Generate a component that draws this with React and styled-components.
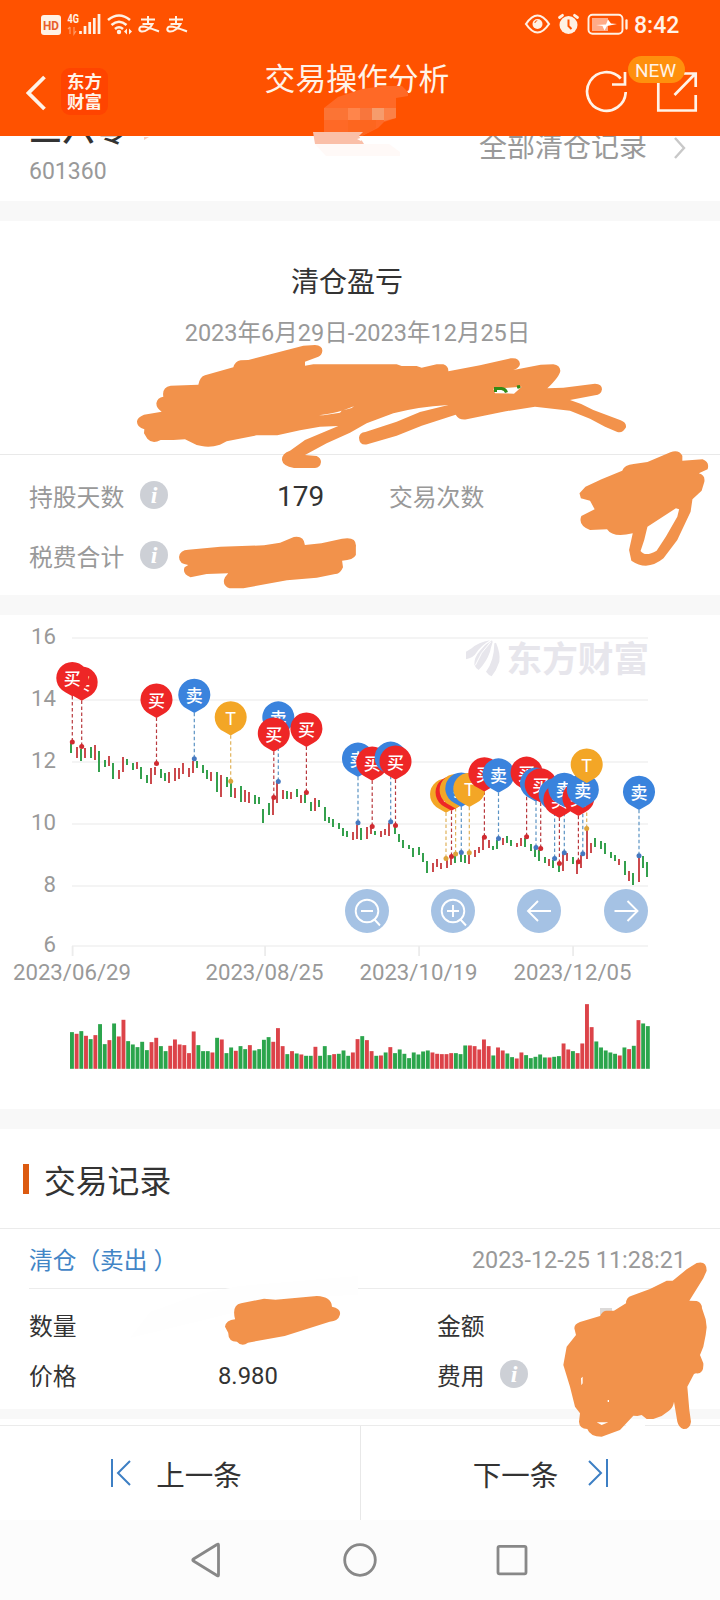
import React from 'react'
import styled, {createGlobalStyle} from 'styled-components'

const RED = '#ee2626'
const BLUE = '#3a83dd'
const GOLD = '#f3a626'

// [x, top, bottom, up/down]
const candles = `71 743 753 g,77 747 758 r,81 749 761 g,85 748 758 r,91 747 758 g,95 745 760 r,99 751 772 g,105 760 767 g,109 756 766 r,113 763 779 g,119 770 779 r,123 757 772 r,127 759 765 g,133 763 770 g,137 762 769 r,141 767 779 g,147 775 783 g,151 768 784 r,155 767 775 r,161 769 778 g,165 773 781 g,169 772 783 r,175 768 781 r,179 768 779 r,183 763 774 r,189 768 777 r,193 761 773 r,197 761 768 g,203 765 773 g,207 770 779 g,211 772 781 r,217 772 792 g,221 775 797 r,227 777 787 g,231 782 797 g,235 788 798 r,241 786 802 g,245 790 802 r,249 792 803 r,255 795 804 g,259 797 804 g,263 809 823 g,269 803 815 g,273 797 815 r,277 783 803 r,283 790 799 r,287 791 799 g,291 792 799 r,297 789 797 g,301 795 803 r,305 794 803 g,311 802 811 g,315 798 811 r,319 800 807 g,325 807 821 g,329 817 823 g,333 819 827 g,339 823 829 g,343 828 836 g,347 831 837 g,353 832 840 r,357 825 839 r,361 828 840 g,367 827 839 r,371 825 834 r,375 831 835 g,381 831 837 r,385 829 835 r,389 823 836 r,395 824 834 g,399 834 842 g,403 840 848 g,409 845 849 g,413 848 857 g,419 847 855 g,423 853 862 g,427 861 873 g,433 863 872 r,437 859 867 r,441 863 869 r,447 859 868 r,451 856 865 r,455 854 863 g,461 853 862 g,465 855 863 g,469 855 864 r,475 850 857 r,479 847 853 r,483 838 850 r,489 840 848 r,493 846 850 g,497 840 849 g,503 838 845 r,507 836 843 g,511 840 846 g,517 843 847 r,521 838 846 r,525 838 847 g,531 844 851 g,535 848 857 g,539 850 861 g,545 857 863 g,549 859 866 r,553 860 868 g,559 863 872 g,563 853 871 r,567 853 861 r,573 857 864 g,577 861 874 r,581 855 868 r,587 830 859 r,591 843 853 r,595 838 847 g,601 841 849 g,605 843 854 g,611 852 858 g,615 855 861 g,619 859 865 r,625 861 875 g,629 871 881 r,633 873 885 g,639 857 882 r,643 856 868 g,647 862 877 g`
    .split(',').map(c => c.split(' '))

// [x, price point y, kind], painted in order
const trades = [
    [81.7, 746.5, 'b'], [72.3, 742, 'b'], [156.5, 763.6, 'b'], [194.3, 758.8, 's'], [230.7, 781.3, 't'],
    [278.3, 781.4, 's'], [273.8, 797.5, 'b'], [306.4, 792.6, 'b'], [358, 822.7, 's'], [372.2, 826.5, 'b'],
    [390.7, 821.7, 's'], [395.5, 825.5, 'b'], [446, 858.5, 't'], [451.5, 856.4, 'b'], [455.6, 854.1, 't'],
    [461.3, 852.6, 's'], [469.3, 852.8, 't'], [484.4, 837.3, 'b'], [498.5, 838.4, 's'], [526.6, 836.7, 'b'],
    [536, 847.5, 's'], [540.7, 848.4, 'b'], [554.6, 858.4, 's'], [559.4, 863.6, 'b'], [564.3, 852.8, 's'],
    [578.4, 861.7, 'b'], [582.8, 853.7, 's'], [586.7, 828.6, 't'], [639, 855.8, 's'],
]

const kinds = {
    b: {label: '买', fill: RED, line: '#b8393e'},
    s: {label: '卖', fill: BLUE, line: '#5b93c4'},
    t: {label: 'T', fill: GOLD, line: '#e0b25a'},
}

const volumes = 'g110 r105 g113 r99 g89 r101 g134 g74 r86 g136 r97 r147 g83 g73 g65 g81 g56 r80 r93 g68 g53 r69 r88 r73 r71 r47 r112 g71 g53 g53 r49 g93 r88 g47 g64 r54 g68 g59 r71 g55 g59 g87 g95 r81 r122 r68 g44 r53 g46 r43 g39 g39 r66 g39 g68 g41 r44 g45 g55 g39 r49 r89 g98 r86 r53 g39 r40 g49 r65 g47 g58 g45 g32 g49 g43 g52 g55 r49 r45 r44 r44 r47 g47 g44 g70 r70 r68 r58 r88 r68 g40 r64 r55 g46 g35 r31 r49 g41 g32 g36 g43 g34 r34 g36 g38 r76 r58 g53 r47 r76 r194 r125 g82 g64 g55 g49 g45 r40 g64 r59 g69 r146 g136 g128'
    .split(' ')

const gridLines = [[16, 638], [14, 700], [12, 762], [10, 824], [8, 886], [6, 946]]
const days = [['2023/06/29', 72.5], ['2023/08/25', 265], ['2023/10/19', 419], ['2023/12/05', 573]]

function Marker({x, y, kind}) {
    const {label, fill} = kinds[kind]
    const cy = y - 62.7
    return (
        <g>
            <path d={`M${x} ${cy + 17}L${x - 7} ${cy + 13}A16 16 0 1 1 ${x + 7} ${cy + 13}Z`} fill={fill} />
            <MarkerText x={x} y={cy + 6} $latin={kind === 't'}>{label}</MarkerText>
        </g>
    )
}

function TradeChart() {
    return (
        <Chart viewBox="0 615 720 494">
            {gridLines.map(([price, y]) => (
                <g key={price}>
                    <rect x="72" y={y - 1} width="576" height="2" fill="#f4f4f4" />
                    <AxisText x="56" y={y + 5.5} textAnchor="end">{price}</AxisText>
                </g>
            ))}
            {days.map(([day, x]) => (
                <g key={day}>
                    <rect x={x - 0.8} y="946" width="1.8" height="10" fill="#ececec" />
                    <AxisText x={x - 0.5} y="980" textAnchor="middle">{day}</AxisText>
                </g>
            ))}
            <g fill="#e7e6ec">
                <g transform="translate(440 620) scale(.33333)">
                    <path d="M78 95L95 85Q115 67 150 61Q122 78 108 100 100 114 78 118z" />
                    <path d="M103 134Q102 112 120 92 136 72 156 61L158 66Q152 85 150 95 140 125 116 150 107 145 103 134z" />
                    <path d="M138 155Q162 125 163 70L168 68Q182 100 178 125 170 150 155 169 145 165 138 155z" />
                    <path d="M152 66Q120 98 106 136" fill="none" stroke="#fff" strokeWidth="3" />
                </g>
                <Watermark x="506.500" y="671.500">东方财富</Watermark>
            </g>
            {candles.map(([x, top, bottom, dir]) => (
                <rect key={x} x={x - 1} y={top} width="2" height={bottom - top} fill={dir === 'r' ? '#cb4a4d' : '#34a04d'} />
            ))}
            {trades.map(([x, y, kind]) => (
                <g key={x}>
                    <path d={`M${x} ${y - 46}V${y}`} stroke={kinds[kind].line} strokeWidth="1.2" strokeDasharray="3.5 2.5" />
                    <circle cx={x} cy={y} r="2.5" fill={kind === 's' ? '#4578c0' : kind === 't' ? '#dda43c' : '#d02a30'} />
                </g>
            ))}
            {trades.map(([x, y, kind]) => <Marker key={x} x={x} y={y} kind={kind} />)}
            {volumes.map((v, i) => {
                const h = v.slice(1) / 3
                return <rect key={i} x={70 + i * 4.682} y={1068.8 - h} width="3.9" height={h} fill={v[0] === 'r' ? '#dc4349' : '#2ba54c'} />
            })}
            {[367, 453, 539, 626].map(x => <circle key={x} cx={x} cy="911" r="22" fill="#a5c2e4" />)}
            <g fill="none" stroke="#fff" strokeWidth="1.9">
                <circle cx="367" cy="911" r="11.300" />
                <path d="M361 911h12M374 919l6 6.500" />
                <circle cx="453" cy="911" r="11.300" />
                <path d="M447 911h12M453 905v12M460 919l6 6.500" />
                <path d="M551 911h-23M538 901l-10 10 10 10" />
                <path d="M614.500 911h23M627.500 901l10 10-10 10" />
            </g>
        </Chart>
    )
}

function Info() {
    return (
        <InfoIcon viewBox="0 0 28 28">
            <circle cx="14" cy="14" r="14" fill="#cdd0d6" />
            <text x="14" y="22" textAnchor="middle" fill="#fff">i</text>
        </InfoIcon>
    )
}

function StatusIcons() {
    return (
        <svg width="170" height="30" viewBox="38 9 170 30" fill="none" stroke="#fff1e4">
            <rect x="41" y="15" width="20" height="20" rx="3" fill="#fff1e4" stroke="none" />
            <SmallText x="43" y="29.500" fill="#e8602a" textLength="16" lengthAdjust="spacingAndGlyphs" $size={12.5}>HD</SmallText>
            <SmallText x="67.500" y="23" fill="#fff1e4" textLength="11.500" lengthAdjust="spacingAndGlyphs" $size={12}>4G</SmallText>
            <path d="M70 27v7M68 29l2-2M74 27v7l2-3" stroke="#ff9a66" strokeWidth="1.200" />
            <path d="M80.500 31v3M85 26v8M89.700 22v12M94.300 18v16M99 14v20" strokeWidth="2.700" />
            <path d="M108 20q11-9 22 0M111.500 25q7.500-6.500 15 0M115 29q4-3.500 8 0" strokeWidth="2.600" />
            <circle cx="119" cy="32" r="2.200" fill="#fff1e4" stroke="none" />
            <path d="M124 31.500l3-3v6zM132 31.500l-3-3v6z" fill="#fff1e4" stroke="none" />
            {[0, 28].map(dx => (
                <g key={dx} transform={`translate(${dx} 0)`} strokeWidth="2">
                    <path d="M141 19.500h14M148 16v8M142.500 24h10c-2 4-7 8-11 7.500-3.500-1-2.500-5 1-5 5 .3 10 2.500 16.500 5" />
                </g>
            ))}
        </svg>
    )
}

function BatteryIcons() {
    return (
        <svg width="105" height="30" viewBox="524 9 105 30" fill="none" stroke="#fff1e4">
            <path d="M526 24q11.500-17 23 0-11.500 17-23 0z" strokeWidth="2.200" />
            <circle cx="537.500" cy="24" r="5" fill="#fff1e4" stroke="none" />
            <path d="M534.800 23a3 3 0 0 1 2.500-2.500" stroke="#ff6a25" strokeWidth="1.200" />
            <circle cx="568.500" cy="25" r="9" fill="#fff1e4" stroke="none" />
            <path d="M568.500 19.500V26l3 3" stroke="#ff5200" strokeWidth="2" />
            <path d="M559.500 17.500l3-2.200M577.500 17.500l-3-2.200" strokeWidth="2.800" strokeLinecap="round" />
            <rect x="588.500" y="14.800" width="34" height="19" rx="4" strokeWidth="1.900" />
            <path d="M592 18h16v13h-16z" fill="#ffab88" stroke="none" />
            <path d="M596 25l10-.5 2-5 3 4 6 .5-10 2-2.500 4.500-2-4.500z" fill="#fff" stroke="none" />
            <path d="M626.500 20.500v8" strokeWidth="2.300" strokeLinecap="round" />
        </svg>
    )
}

// Brush strokes painted over private figures
function Redactions() {
    return (
        <Overlay viewBox="0 0 720 1600">
            <path d="M324 108L338 97 362 89 384 86H402L408 92V96L396 98V118L384 122 378 128 362 136H324z" fill="#ff6926" />
            <path d="M348 108h12v12h-12z" fill="#ff854b" />
            <path d="M360 108h12v12h-12z" fill="#f8763d" />
            <path d="M372 108h12v12h-12z" fill="#f69c6c" />
            <path d="M384 108h12v10l-12 3z" fill="#fb8147" />
            <path d="M324 108h24v12h-24z" fill="#fb7435" />
            <path d="M348 120h28v8l-14 8h-14z" fill="#fd661f" />
            <path d="M313 132h50l-4 4 5 8H315z" fill="#fabfa8" />
            <path d="M357 139l7-2-3 4z" fill="#fff" />
            <path d="M315 144h74l11 8v4h-74z" fill="#fff9f7" />
            <path d="M144 137h5l-5 3z" fill="#f8cabc" />
            <path d="M130 1338l20-26 50-18 40-8 118-10v19l-60 2z" fill="#fefefe" />
            <path d="M600 1308h12v7h-12z" fill="#dcdad9" />
            <path d="M630 1420h15v10h-22z" fill="#fff" />
            <g fill="#f2924b" fillRule="evenodd">
                <path transform="translate(120 250) scale(.33333)" d="M72 494L125 485Q109 475 109 460Q112 442 130 440Q125 412 152 407L235 404Q240 380 255 376L340 352Q345 334 362 331L385 330 550 287 585 285Q608 287 607 303Q606 315 595 320L555 335V347L580 343H830L845 348 890 348 905 353 950 343 970 343Q986 348 985 364L1080 346 1172 325Q1198 322 1200 342Q1198 354 1180 360L1165 363 1262 344 1300 343Q1320 346 1321 362Q1320 378 1282 415L1330 413 1425 401Q1446 402 1446 418Q1444 434 1425 436L1350 450Q1385 460 1420 480L1502 511Q1520 518 1518 532Q1508 551 1492 546L1455 530 1410 506 1350 482 1245 470 1150 485 1040 508Q1018 512 1007 494L905 527 830 557 742 583Q718 587 717 563Q718 548 736 546L830 515 900 486 985 465Q890 471 820 490L740 520 690 548 620 580 555 615 590 618Q603 624 603 636Q601 653 585 654H522Q488 648 486 630Q485 610 510 602L555 570 655 528 600 530 540 541 472 556H410L320 574 300 584Q270 594 245 588L230 585 195 568 160 570 122 570Q97 583 82 566L72 550 73 538Q50 532 51 514Q52 502 72 494zM1120 416L1165 413 1205 410 1182 431 1125 430zM597 496Q640 490 665 482L660 488 610 496zM670 481L702 469 695 474z" />
                <path transform="translate(0 440) scale(.45918 .33333)" d="M1262 160L1275 140 1310 118 1355 92Q1360 74 1380 72L1410 66 1460 37Q1478 28 1486 47V62L1530 58Q1546 66 1541 88L1522 100Q1536 105 1534 125L1528 152 1508 178 1504 215 1475 300 1445 355Q1410 395 1375 362L1370 330 1378 280Q1335 295 1322 268L1285 270Q1258 255 1266 228L1295 208 1285 182 1265 175zM1472 205L1410 260 1403 300 1395 333Q1405 352 1430 332L1450 290 1475 230 1479 208z" />
                <path transform="translate(0 440) scale(.45918 .33333)" d="M390 350Q392 330 410 329L480 320 575 316 610 308 640 291Q662 286 664 315L700 310 745 296Q778 288 775 322V345Q770 360 745 362L747 382Q740 404 730 402L690 413 625 421 580 432 530 445H500Q482 435 490 412L497 400 450 402 415 412Q396 402 402 382L410 375Q389 372 390 350z" />
                <path transform="translate(0 1140) scale(.45918 .33333)" d="M490 560Q492 541 512 538 504 496 525 490L575 476 600 479 690 468Q722 470 723 500 744 506 740 525 737 543 718 545L620 588 540 608Q527 622 516 605 497 605 497 578z" />
                <path transform="translate(540 1240) scale(.33333)" d="M103 265Q103 252 120 246L180 228Q188 212 200 212H222L258 190Q258 172 275 167L330 147 380 122 398 122 440 88 470 69Q500 61 500 92L490 115 448 182 470 183Q486 188 486 205L497 238 500 262 497 285 490 320 480 345 490 370Q492 403 468 400L462 402 442 440 448 510 453 545Q450 568 430 567 416 562 412 545L402 485Q400 502 387 512L365 528 340 537H320L305 525 292 528 280 527 240 570 185 590Q150 590 142 567 118 566 117 545L120 520 105 500 90 440 70 375 80 320 108 285zM123 415L128 410V430L124 436zM170 547H205L185 555zM203 480h4v6h-4z" />
            </g>
            <path d="M495.500 392v-3.500h6q4 .5 5 4M517 387l3-.5-2 1" fill="none" stroke="#328b16" strokeWidth="3" />
        </Overlay>
    )
}

export default function App() {
    return (
        <Screen>
            <GlobalStyle />
            <Header>
                <StatusBar>
                    <StatusIcons />
                    <StatusRight><BatteryIcons /><Clock>8:42</Clock></StatusRight>
                </StatusBar>
                <TitleBar>
                    <HeaderLeft>
                        <svg width="20" height="38" viewBox="0 0 20 38" fill="none" stroke="#fff3e8" strokeWidth="3.800"><path d="M18.500 3L2.500 19l16 16" /></svg>
                        <Brand><span>东方</span><span>财富</span></Brand>
                    </HeaderLeft>
                    <Title>交易操作分析</Title>
                    <HeaderRight>
                        <svg width="42" height="44" viewBox="585 69 42 44" fill="none" stroke="#fff3e8" strokeWidth="2.700">
                            <path d="M625.700 92a19.300 19.300 0 1 1-5-13.500M625 72v12.500H612" />
                        </svg>
                        <ShareBox>
                            <svg width="42" height="44" viewBox="656 69 42 44" fill="none" stroke="#fff3e8" strokeWidth="2.700">
                                <path d="M672 73.500H658.300V110.500H695.700V95M683 73.500h12.700V87M695 74l-20.500 21" />
                            </svg>
                            <NewBadge>NEW</NewBadge>
                        </ShareBox>
                    </HeaderRight>
                </TitleBar>
            </Header>
            <StockRow>
                <div>
                    <StockName>三六零</StockName>
                    <StockCode>601360</StockCode>
                </div>
                <AllRecords>
                    全部清仓记录
                    <svg width="14" height="24" viewBox="0 0 14 24" fill="none" stroke="#c8c8c8" strokeWidth="2.400"><path d="M2 2l9 10-9 10" /></svg>
                </AllRecords>
            </StockRow>
            <Gap />
            <Profit>
                <ProfitTitle>清仓盈亏</ProfitTitle>
                <ProfitDate>2023年6月29日-2023年12月25日</ProfitDate>
            </Profit>
            <Stats>
                <StatRow>
                    <StatCell><Label>持股天数</Label><Info /><Days>179</Days></StatCell>
                    <Label>交易次数</Label>
                </StatRow>
                <StatRow>
                    <StatCell><Label>税费合计</Label><Info /></StatCell>
                </StatRow>
            </Stats>
            <Gap />
            <TradeChart />
            <Gap />
            <RecordTitle>交易记录</RecordTitle>
            <RecordHead>
                <RecordKind>清仓（卖出<span>）</span></RecordKind>
                <RecordTime>2023-12-25 11:28:21</RecordTime>
            </RecordHead>
            <RecordBody>
                <RecordLabel>数量</RecordLabel><span /><RecordLabel>金额</RecordLabel>
                <RecordLabel>价格</RecordLabel><RecordValue>8.980</RecordValue><RecordLabel>费用<Info /></RecordLabel>
            </RecordBody>
            <Gap $small />
            <Pager>
                <PageButton>
                    <svg width="22" height="30" viewBox="0 0 22 30" fill="none" stroke="#3d7fc4" strokeWidth="2"><path d="M2 1v28M20 3L8 15l12 12" /></svg>
                    上一条
                </PageButton>
                <PageButton $next>
                    下一条
                    <svg width="22" height="30" viewBox="0 0 22 30" fill="none" stroke="#3d7fc4" strokeWidth="2"><path d="M20 1v28M2 3l12 12L2 27" /></svg>
                </PageButton>
            </Pager>
            <NavBar viewBox="0 1520 720 80">
                <path d="M218.500 1545v30q0 1.500-1.500.5L193.500 1561q-1.500-1 0-2L217 1544.500q1.500-1 1.500.5z" />
                <circle cx="360" cy="1560" r="15.300" />
                <rect x="498" y="1546.300" width="28" height="27.500" rx="1.500" />
            </NavBar>
            <Redactions />
        </Screen>
    )
}

const GlobalStyle = createGlobalStyle`
body {
    margin: 0;
    background: #fff;
}
* {
    box-sizing: border-box;
}
svg {
    display: block;
    flex-shrink: 0;
}
`

const Screen = styled.div`
position: relative;
width: 720px;
height: 1600px;
overflow: hidden;
background: #fff;
color: #333;
font-family: Roboto, "Noto Sans CJK SC", sans-serif;
font-size: 23.5px;
`

const Header = styled.header`
height: 136px;
background: #ff5200;
color: #fff3e8;
`

const StatusBar = styled.div`
display: flex;
justify-content: space-between;
height: 48px;
padding: 9px 40px 0 38px;
`

const StatusRight = styled.div`
display: flex;
`

const Clock = styled.span`
width: 51px;
padding-left: 5px;
font-size: 23px;
font-weight: 500;
line-height: 33px;
`

const TitleBar = styled.div`
display: grid;
grid-template-columns: 262px 190px 1fr;
height: 88px;
`

const HeaderLeft = styled.div`
display: flex;
gap: 15px;
padding: 20px 0 0 26px;

> svg {
    margin-top: 6px;
}
`

const Brand = styled.div`
display: flex;
flex-direction: column;
width: 47px;
height: 47px;
padding-top: 3px;
border-radius: 9px;
background: #ff4400;
font-family: "Noto Sans CJK SC", sans-serif;
font-size: 17.5px;
font-weight: 700;
line-height: 20px;
text-align: center;
`

const Title = styled.h1`
margin: 0;
font-size: 30.8px;
font-weight: 400;
line-height: 64px;
text-align: center;
white-space: nowrap;
`

const HeaderRight = styled.div`
display: flex;
justify-content: flex-end;
gap: 29px;
padding: 21px 22px 0 0;
`

const ShareBox = styled.div`
position: relative;
`

const NewBadge = styled.span`
position: absolute;
top: -13px;
left: -28px;
width: 57px;
height: 27px;
padding-right: 2px;
border-radius: 14px;
background: #ff900d;
font-size: 19px;
font-weight: 400;
line-height: 29px;
text-align: center;
`

const StockRow = styled.div`
display: flex;
justify-content: space-between;
height: 65px;
padding: 0 33px 0 29px;
overflow: hidden;
`

const StockName = styled.div`
height: 22px;
margin-top: -18px;
font-size: 33px;
font-weight: 500;
line-height: 24px;
`

const StockCode = styled.div`
margin-top: 18px;
color: #999;
font-size: 23px;
line-height: 28px;
`

const AllRecords = styled.div`
display: flex;
align-items: center;
gap: 26px;
height: 24px;
color: #999;
font-size: 28px;
line-height: 26px;
`

const Gap = styled.div`
height: ${p => p.$small ? '10px' : '20px'};
background: #f8f8f8;
`

const Profit = styled.section`
height: 234px;
padding-top: 42px;
border-bottom: 1px solid #e9e9e9;
text-align: center;
`

const ProfitTitle = styled.h2`
margin: 0;
padding-right: 26px;
font-size: 28px;
font-weight: 400;
line-height: 40px;
`

const ProfitDate = styled.div`
margin-top: 14px;
padding-right: 5px;
color: #999;
line-height: 32px;
`

const Stats = styled.section`
height: 140px;
padding: 10px 29px 0;
`

const StatRow = styled.div`
display: flex;
height: 60px;
align-items: center;
`

const StatCell = styled.div`
display: flex;
align-items: center;
width: 360px;
`

const Label = styled.span`
width: 111px;
color: #999;
font-size: 23.8px;
`

const Days = styled.span`
margin: 2px 0 0 109px;
font-size: 28px;
`

const InfoIcon = styled.svg`
width: 28px;
height: 28px;

text {
    font: italic bold 24px "Liberation Serif", serif;
}
`

const Chart = styled.svg`
width: 720px;
height: 494px;
`

const AxisText = styled.text`
fill: #999;
font-size: 22.2px;
`

const Watermark = styled.text`
font-family: "Noto Sans CJK SC", sans-serif;
font-size: 35.700px;
font-weight: 700;
`

const MarkerText = styled.text`
fill: #fff;
font-family: ${p => p.$latin ? 'Roboto' : '"Noto Sans CJK SC"'}, sans-serif;
font-size: ${p => p.$latin ? '18px' : '17px'};
font-weight: ${p => p.$latin ? 400 : 500};
text-anchor: middle;
`

const SmallText = styled.text`
stroke: none;
font-size: ${p => p.$size}px;
font-weight: 700;
`

const RecordTitle = styled.h2`
display: flex;
align-items: center;
gap: 15px;
height: 100px;
margin: 0;
padding-left: 23px;
border-bottom: 1px solid #ebebeb;
font-size: 31.8px;
font-weight: 400;

&:before {
    content: '';
    width: 6px;
    height: 30px;
    background: #dc5a10;
}
`

const RecordHead = styled.div`
display: flex;
align-items: center;
justify-content: space-between;
height: 60px;
margin: 0 29px;
padding-right: 5px;
border-bottom: 1px solid #ececec;
`

const RecordKind = styled.span`
color: #4285c6;
font-size: 23.7px;

span {
    margin-left: 6px;
}
`

const RecordTime = styled.span`
padding-top: 2px;
color: #999;
font-size: 23.4px;
`

const RecordBody = styled.div`
display: grid;
grid-template-columns: 189px 219px 1fr;
grid-template-rows: 50px 50px;
align-items: center;
height: 120px;
padding: 10px 29px 0;
font-size: 23.8px;
`

const RecordLabel = styled.span`
display: flex;
align-items: center;
gap: 15px;
`

const RecordValue = styled.span`
padding-top: 3px;
`

const Pager = styled.div`
display: flex;
height: 95px;
margin-top: 6px;
border-top: 1px solid #ebebeb;
`

const PageButton = styled.div`
display: flex;
align-items: center;
justify-content: center;
width: 360px;
gap: ${p => p.$next ? '29px' : '24px'};
padding: ${p => p.$next ? '0 0 0 1px' : '0 8px 0 0'};
border-left: ${p => p.$next ? '1px solid #e8e8e8' : 'none'};
font-size: 28.5px;
`

const NavBar = styled.svg`
width: 720px;
height: 80px;
background: #fcfcfc;
fill: none;
stroke: #888;
stroke-width: 2.8;
`

const Overlay = styled.svg`
position: absolute;
top: 0;
left: 0;
width: 720px;
height: 1600px;
pointer-events: none;
`
